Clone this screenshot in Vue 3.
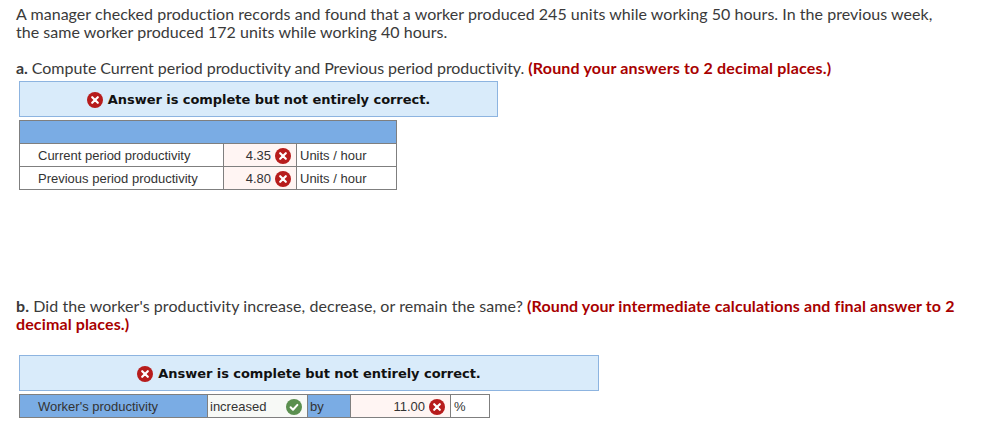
<script setup>
const rows = [
  { label: 'Current period productivity', value: '4.35' },
  { label: 'Previous period productivity', value: '4.80' }
]
const banner = 'Answer is complete but not entirely correct.'
</script>

<template>
  <div class="page">
    <p class="intro">A manager checked production records and found that a worker produced 245 units while working 50 hours. In the previous week, the same worker produced 172 units while working 40 hours.</p>

    <p class="question q-a"><b>a.</b> Compute Current period productivity and Previous period productivity. <strong>(Round your answers to 2 decimal places.)</strong></p>

    <div class="banner banner-a">
      <svg class="mark" viewBox="0 0 16 16" width="16" height="16">
        <circle cx="8" cy="8" r="8" fill="#b71c1c" />
        <path d="M5.2 5.2l5.6 5.6M10.8 5.2l-5.6 5.6" stroke="#fff" stroke-width="2.2" stroke-linecap="round" />
      </svg>
      <span>{{ banner }}</span>
    </div>

    <table class="grid grid-a">
      <colgroup>
        <col style="width: 204px" />
        <col style="width: 73px" />
        <col style="width: 100px" />
      </colgroup>
      <thead>
        <tr><th colspan="3"></th></tr>
      </thead>
      <tbody>
        <tr v-for="row in rows" :key="row.label">
          <td class="label">{{ row.label }}</td>
          <td class="wrong">
            <div class="answer-inner">
              <span>{{ row.value }}</span>
              <svg viewBox="0 0 16 16" width="16" height="16">
                <circle cx="8" cy="8" r="8" fill="#b71c1c" />
                <path d="M5.2 5.2l5.6 5.6M10.8 5.2l-5.6 5.6" stroke="#fff" stroke-width="2.2" stroke-linecap="round" />
              </svg>
            </div>
          </td>
          <td class="unit">Units / hour</td>
        </tr>
      </tbody>
    </table>

    <p class="question q-b"><b>b.</b> Did the worker's productivity increase, decrease, or remain the same? <strong>(Round your intermediate calculations and final answer to 2 decimal places.)</strong></p>

    <div class="banner banner-b">
      <svg class="mark" viewBox="0 0 16 16" width="16" height="16">
        <circle cx="8" cy="8" r="8" fill="#b71c1c" />
        <path d="M5.2 5.2l5.6 5.6M10.8 5.2l-5.6 5.6" stroke="#fff" stroke-width="2.2" stroke-linecap="round" />
      </svg>
      <span>{{ banner }}</span>
    </div>

    <table class="grid grid-b">
      <colgroup>
        <col style="width: 188px" />
        <col style="width: 100px" />
        <col style="width: 43px" />
        <col style="width: 100px" />
        <col style="width: 39px" />
      </colgroup>
      <tbody>
        <tr>
          <td class="blue worker">Worker's productivity</td>
          <td class="choice">
            <div class="answer-inner spread">
              <span>increased</span>
              <svg viewBox="0 0 16 16" width="16" height="16">
                <circle cx="8" cy="8" r="8" fill="#5a8f4f" />
                <path d="M4.6 8.3l2.4 2.4 4.4-4.8" fill="none" stroke="#fff" stroke-width="2" stroke-linecap="round" stroke-linejoin="round" />
              </svg>
            </div>
          </td>
          <td class="blue by">by</td>
          <td class="wrong">
            <div class="answer-inner">
              <span>11.00</span>
              <svg viewBox="0 0 16 16" width="16" height="16">
                <circle cx="8" cy="8" r="8" fill="#b71c1c" />
                <path d="M5.2 5.2l5.6 5.6M10.8 5.2l-5.6 5.6" stroke="#fff" stroke-width="2.2" stroke-linecap="round" />
              </svg>
            </div>
          </td>
          <td class="unit">%</td>
        </tr>
      </tbody>
    </table>
  </div>
</template>

<style>
html, body {
  margin: 0;
  background: #fff;
}
</style>

<style scoped>
.page {
  width: 981px;
  height: 430px;
  box-sizing: border-box;
  padding: 5px 16px 0;
  overflow: hidden;
  font-family: "Lato", "Liberation Sans", sans-serif;
  font-size: 16px;
  letter-spacing: 0.04px;
  line-height: 18px;
  color: #3a3a3a;
}

p {
  margin: 0;
}

.intro {
  width: 925px;
}

.q-a {
  margin-top: 18px;
  letter-spacing: -0.05px;
}

.q-b {
  margin-top: 107px;
  width: 950px;
  letter-spacing: 0.08px;
}

strong {
  color: #a80000;
  letter-spacing: 0.18px;
}

.q-b strong {
  letter-spacing: 0.12px;
}

.banner {
  box-sizing: border-box;
  height: 36px;
  margin-left: 3px;
  padding-top: 2px;
  display: flex;
  align-items: center;
  justify-content: center;
  gap: 5px;
  background: #d9ebfa;
  border: 1px solid #8db4e0;
  font-family: "DejaVu Sans", sans-serif;
  font-size: 13px;
  font-weight: bold;
  letter-spacing: -0.05px;
  color: #111;
}

.banner-a {
  width: 479px;
  margin-top: 4px;
}

.banner-b {
  width: 580px;
  margin-top: 22px;
}

.grid {
  margin-left: 3px;
  border-collapse: collapse;
  table-layout: fixed;
  font-family: "Liberation Sans", sans-serif;
  font-size: 13px;
  letter-spacing: 0;
  color: #333;
}

.grid td,
.grid th {
  border: 1px solid #7f7f7f;
  padding: 1px 0 0;
  height: 21px;
}

.grid-a {
  width: 377px;
  margin-top: 3px;
}

.grid-a th {
  background: #7aace4;
}

.grid td.label {
  padding-left: 18px;
}

.wrong {
  background: #fff5f3;
}

.answer-inner {
  display: flex;
  align-items: center;
  justify-content: flex-end;
  gap: 4px;
  padding-right: 5px;
}

.answer-inner.spread {
  justify-content: space-between;
  padding: 0 5px 0 2px;
}

.grid td.unit {
  padding-left: 3px;
}

.grid-b {
  width: 470px;
  margin-top: 3px;
}

.blue {
  background: #7aace4;
}

.grid td.worker {
  padding-left: 18px;
}

.choice {
  background: #f7f9f6;
}

.grid td.by {
  padding-left: 2px;
}
</style>
